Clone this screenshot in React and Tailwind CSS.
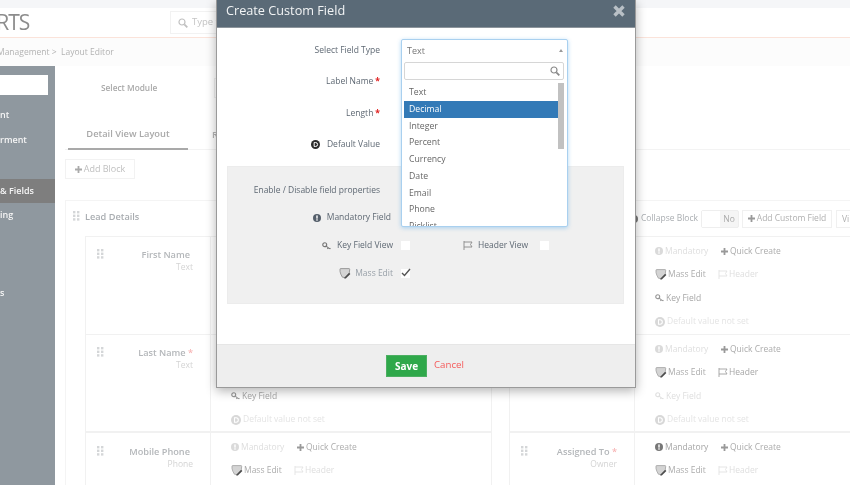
import React from "react";

const Dots = ({ c = "#d4d6d8" }) => (
  <svg width="7" height="10" viewBox="0 0 7 10" fill={c} className="shrink-0">
    {[0, 4].map((x) => [0, 3.6, 7.2].map((y) => <rect key={x + "-" + y} x={x} y={y} width="2.4" height="2.4" />))}
  </svg>
);
const Bang = ({ c = "#555f6b", s = 9 }) => (
  <svg width={s} height={s} viewBox="0 0 10 10" className="shrink-0">
    <circle cx="5" cy="5" r="5" fill={c} />
    <rect x="4.1" y="1.8" width="1.8" height="4" fill="#fff" />
    <rect x="4.1" y="6.6" width="1.8" height="1.7" fill="#fff" />
  </svg>
);
const Dee = ({ c = "#d8d8d8", s = 10, t = "#fff" }) => (
  <svg width={s} height={s} viewBox="0 0 10 10" className="shrink-0">
    <circle cx="5" cy="5" r="5" fill={c} />
    <path d="M3.5 2.8h1.6a2.2 2.2 0 0 1 0 4.4H3.5z" fill="none" stroke={t} strokeWidth="1.1" />
  </svg>
);
const Key = ({ c = "#777" }) => (
  <svg width="9" height="8" viewBox="0 0 10 9" fill="none" stroke={c} className="shrink-0">
    <circle cx="3" cy="3" r="2.2" strokeWidth="1.3" />
    <path d="M4.6 4.6 8.6 7.8M7 6.5 6 7.8M8.6 7.8 9.4 6.8" strokeWidth="1.2" />
  </svg>
);
const Flag = ({ c = "#777" }) => (
  <svg width="10" height="9" viewBox="0 0 10 9" fill="none" stroke={c} strokeWidth="0.9" className="shrink-0">
    <path d="M1 0v9M1 1h8L7.5 3.5 9 6H1" />
  </svg>
);
const Mass = ({ c = "#777" }) => (
  <svg width="12" height="11" viewBox="0 0 12 11" className="shrink-0">
    <path d="M1 1.2 Q1 .6 1.8 .6H10q.8 0 .7.8l-.4 3.4L6.5 9.6 3.4 9.2Q1.4 6 1 3.5z" fill="#d4d4d4" stroke={c} strokeWidth="0.8" />
    <path d="M5.4 9.6 10.2 4.8l1.2 1.2-4.6 4.4-1.6.2z" fill="#4d4d4d" />
  </svg>
);
const Plus = ({ c = "#777" }) => (
  <svg width="7" height="7" viewBox="0 0 7 7" fill={c} className="shrink-0">
    <path d="M2.6 0h1.8v2.6H7v1.8H4.4V7H2.6V4.4H0V2.6h2.6z" />
  </svg>
);
const Search = ({ c = "#8a8a8a", s = 10 }) => (
  <svg width={s} height={s} viewBox="0 0 10 10" fill="none" stroke={c} className="shrink-0">
    <circle cx="4" cy="4" r="3" strokeWidth="1.2" />
    <path d="M6.3 6.3 9.3 9.3" strokeWidth="1.8" />
  </svg>
);

const DIM = "#dedede";
const ON = "#a6a6a6";

const Row = ({ children, className = "" }) => <div className={"flex h-[23.5px] shrink-0 items-center whitespace-nowrap " + className}>{children}</div>;

const Props = ({ mand, hdr, key1 = true, pad, short }) => (
  <div className={"flex flex-col pt-[2.5px] text-[8.5px] " + pad}>
    <Row>
      <div className="flex w-[66px] items-center gap-[2px]" style={{ color: mand ? ON : DIM }}>
        <Bang c={mand ? "#777" : "#dadada"} s={8} />
        <span>Mandatory</span>
      </div>
      <div className="flex items-center gap-[2px] text-[#acacac]">
        <Plus c="#999" />
        <span>Quick Create</span>
      </div>
    </Row>
    <Row>
      <div className="flex w-[63px] items-center gap-[1px] text-[#acacac]">
        <Mass c="#a0a0a0" />
        <span>Mass Edit</span>
      </div>
      <div className="flex items-center gap-[1px]" style={{ color: hdr ? ON : DIM }}>
        <Flag c={hdr ? "#a0a0a0" : "#e2e2e2"} />
        <span>Header</span>
      </div>
    </Row>
    {!short && (
      <Row className="gap-[2px]">
        <Key c={key1 ? "#999" : "#e0e0e0"} />
        <span style={{ color: key1 ? ON : DIM }}>Key Field</span>
      </Row>
    )}
    {!short && (
      <Row className="gap-[2px] text-[#e4e4e4]">
        <Dee />
        <span>Default value not set</span>
      </Row>
    )}
  </div>
);

const FieldLabel = ({ name, type, req, top }) => (
  <div className={"flex w-[125px] shrink-0 border-r border-[#f1f1f1] pl-[11px] pr-[17px] " + top}>
    <Dots />
    <div className="flex-1 text-right">
      <div className={"text-[9.2px] leading-[12px] font-semibold text-[#b4b7ba] " + (req ? "" : "pr-[3px]")}>
        {name}
        {req && <span className="text-[#f7b5b5]"> *</span>}
      </div>
      <div className="text-[8.5px] leading-[12px] text-[#d4d4d4]">{type}</div>
    </div>
  </div>
);

const Opt = ({ children, on }) => (
  <div className={"h-[16.75px] pl-[5px] text-[8.7px] leading-[16.75px] " + (on ? "bg-[#337ab7] text-white" : "text-[#666]")}>
    {children}
  </div>
);

const Box = ({ checked }) => (
  <div className="relative h-[9px] w-[9px] bg-white">
    {checked && (
      <svg width="10" height="9" viewBox="0 0 10 9" className="absolute -top-[1px] left-0" fill="none" stroke="#555" strokeWidth="1.4">
        <path d="M1 5l2.5 2.5L9 1" />
      </svg>
    )}
  </div>
);

export default function App() {
  return (
    <div className="relative h-[485px] w-[850px] overflow-hidden bg-white blur-[0.4px]" style={{ fontFamily: '"Open Sans", sans-serif' }}>
      <div className="h-[8px] bg-[#f5f6f8]" />
      <header className="flex h-[30px] items-center border-b border-[#fbe3da] bg-white">
        <div className="-ml-[16px] w-[186px] text-[21px] leading-none tracking-[-1px] text-[#8c8c8c]">ARTS</div>
        <div className="flex h-[23px] w-[60px] items-center gap-[4px] border border-[#f2f2f2] pl-[7px] text-[9.5px] text-[#c4c4c4]">
          <Search c="#c0c0c0" />
          <span className="whitespace-nowrap">Type t</span>
        </div>
      </header>
      <div className="flex h-[28px] items-center bg-[#fcfcfc] text-[8.5px] text-[#b3b3b3]">
        <span className="-ml-[3px] whitespace-nowrap">Management &gt;&nbsp; Layout Editor</span>
      </div>
      <div className="flex h-[419px]">
        <aside className="w-[55px] shrink-0 overflow-hidden bg-[#8f989f] pt-[9px] text-[9px] font-semibold text-[#f5f5f5]">
          <div className="h-[20px] w-[48px] bg-white" />
          <div className="mt-[14px] h-[12px] leading-[12px]">nt</div>
          <div className="mt-[13px] h-[12px] whitespace-nowrap leading-[12px]">rment</div>
          <div className="mt-[33px] flex h-[24px] items-center whitespace-nowrap bg-[#7e7e7e]">&amp; Fields</div>
          <div className="mt-[6px] h-[12px] leading-[12px]">ing</div>
          <div className="mt-[66px] h-[12px] leading-[12px]">s</div>
        </aside>
        <main className="min-w-0 flex-1 pl-[10px]">
          <div className="flex h-[44px] items-center pl-[36px] text-[8.3px] font-semibold text-[#a9a9a9]">
            Select Module
            <div className="ml-[57px] h-[20px] w-[20px] border border-[#f0f0f0]" />
          </div>
          <div className="flex h-[40px] border-b border-[#f3f3f3] pl-[3px]">
            <div className="flex h-[40px] w-[120px] items-center justify-center border-b-2 border-[#a9a9a9] pt-[10px] text-[9.3px] font-semibold text-[#a9a9a9]">
              Detail View Layout
            </div>
            <div className="ml-[24px] flex items-center pt-[10px] text-[9.3px] font-semibold text-[#b5b5b5]">R</div>
          </div>
          <div className="mt-[9px] flex h-[20px] w-[70px] items-center justify-center gap-[2px] border border-[#f2f2f2] text-[9px] text-[#c0c0c0]">
            <Plus c="#aaa" />
            Add Block
          </div>
          <section className="mt-[21px] w-[900px] border border-[#f4f4f4] pl-[19px]">
            <div className="flex h-[35px] items-center">
              <div className="-ml-[12px] -mt-[4px] flex w-[557px] shrink-0 items-center gap-[5px] text-[9.2px] font-semibold text-[#a9adb1]">
                <Dots />
                Lead Details
              </div>
              <div className="flex shrink-0 items-center gap-[3px] text-[8.5px] text-[#a9adb1]">
                <Bang c="#777" s={8} />
                <span className="whitespace-nowrap">Collapse Block</span>
                <div className="flex h-[18px] w-[38px] rounded-[2px] border border-[#eee] bg-[#f5f5f5]">
                  <div className="w-[18px] bg-white" />
                  <div className="flex-1 text-center leading-[16px] text-[#aaa]">No</div>
                </div>
                <div className="flex h-[18px] w-[90px] items-center justify-center gap-[2px] whitespace-nowrap border border-[#f0f0f0] text-[#b0b0b0]">
                  <Plus c="#999" />
                  Add Custom Field
                </div>
                <div className="ml-[1px] h-[18px] w-[40px] border border-[#f0f0f0] pl-[5px] leading-[16px] text-[#b0b0b0]">Vi</div>
              </div>
            </div>
            <div className="flex gap-[17px]">
              <div className="w-[407px] shrink-0 border border-[#f1f1f1]">
                <div className="flex h-[98px] border-b border-[#f1f1f1]">
                  <FieldLabel name="First Name" type="Text" top="pt-[12px]" />
                </div>
                <div className="flex h-[98px] border-b-2 border-[#f1f1f1]">
                  <FieldLabel name="Last Name" type="Text" req top="pt-[12px]" />
                  <Props pad="pl-[20px]" />
                </div>
                <div className="flex h-[60px]">
                  <FieldLabel name="Mobile Phone" type="Phone" top="pt-[13px]" />
                  <Props short pad="pl-[20px]" />
                </div>
              </div>
              <div className="w-[400px] shrink-0 border border-[#f1f1f1]">
                <div className="flex h-[98px] border-b border-[#f1f1f1]">
                  <FieldLabel name="" type="" top="" />
                  <Props pad="pl-[20px]" />
                </div>
                <div className="flex h-[98px] border-b-2 border-[#f1f1f1]">
                  <FieldLabel name="" type="" top="" />
                  <Props hdr key1={false} pad="pl-[20px]" />
                </div>
                <div className="flex h-[60px]">
                  <FieldLabel name="Assigned To" type="Owner" req top="pt-[13px]" />
                  <Props mand short pad="pl-[20px]" />
                </div>
              </div>
            </div>
          </section>
        </main>
      </div>

      {/* Modal */}
      <div className="absolute top-0 left-[216px] flex h-[388px] w-[420px] flex-col border border-t-0 border-[#9a9a9a] bg-white shadow-[0_3px_10px_rgba(0,0,0,0.3)]">
        <div className="flex h-[28px] shrink-0 items-center justify-between border-b border-[#8d959c] bg-[#5a6a77] pr-[10px] pb-[6px] pl-[9px]">
          <span className="text-[12.7px] font-normal text-[#f2f4f5]">Create Custom Field</span>
          <svg width="12" height="12" viewBox="0 0 12 12" stroke="#b9c0c6" strokeWidth="3.4">
            <path d="M1.5 1.5l9 9M10.5 1.5l-9 9" />
          </svg>
        </div>
        <div className="relative flex-1 pt-[6.5px] pr-[11px] pl-[10px] text-[8.5px] font-normal text-[#5e6873]">
          <div className="flex h-[31.5px] items-center justify-end pr-[244px]">Select Field Type</div>
          <div className="flex h-[31.5px] items-center justify-end gap-[2px] pr-[244px]">
            Label Name <span className="font-bold text-[#e02020]">*</span>
          </div>
          <div className="flex h-[31.5px] items-center justify-end gap-[2px] pr-[244px]">
            Length <span className="font-bold text-[#e02020]">*</span>
          </div>
          <div className="flex h-[31.5px] items-center justify-end gap-[7px] pr-[244px]">
            <Dee c="#2b2b2b" s={9} />
            Default Value
          </div>
          <div className="mt-[5px] h-[138px] border border-[#ececec] bg-[#f0f0f0] pt-[15px]">
            <div className="flex h-[18px] items-center justify-end pr-[243px]">Enable / Disable field properties</div>
            <div className="mt-[9px] flex h-[18px] items-center justify-end gap-[6px] pr-[232px]">
              <Bang s={8} />
              Mandatory Field
            </div>
            <div className="mt-[10px] flex h-[18px] items-center">
              <div className="flex w-[165px] items-center justify-end gap-[6px]">
                <Key />
                <span className="font-medium">Key Field View</span>
              </div>
              <div className="ml-[8px]"><Box /></div>
              <div className="ml-[53px] flex items-center gap-[5px]">
                <Flag c="#888" />
                <span className="font-medium">Header View</span>
              </div>
              <div className="ml-[12px]"><Box /></div>
            </div>
            <div className="mt-[10px] flex h-[18px] items-center">
              <div className="flex w-[165px] items-center justify-end gap-[4px] text-[#98a0a8]">
                <Mass c="#888" />
                Mass Edit
              </div>
              <div className="ml-[8px]"><Box checked /></div>
            </div>
          </div>

          {/* Open select */}
          <div className="absolute top-[11px] left-[184px] h-[188px] w-[167px] overflow-hidden rounded-[2px] border border-[#a9d0ef] bg-white shadow-[0_1px_4px_rgba(82,168,236,0.45)]">
            <div className="flex h-[21px] items-center justify-between pr-[4px] pl-[5px] text-[9px] text-[#777]">
              Text
              <span className="h-0 w-0 border-x-[2.5px] border-b-[3.5px] border-x-transparent border-b-[#999]" />
            </div>
            <div className="mr-[3px] ml-[2px] mt-[1px] flex h-[18px] items-center justify-end rounded-[2px] border border-[#d6d6d6] pr-[3px]">
              <Search />
            </div>
            <div className="relative mr-[3px] ml-[2px] mt-[4px]">
              <div className="mr-[6px]">
                <Opt>Text</Opt>
                <Opt on>Decimal</Opt>
                <Opt>Integer</Opt>
                <Opt>Percent</Opt>
                <Opt>Currency</Opt>
                <Opt>Date</Opt>
                <Opt>Email</Opt>
                <Opt>Phone</Opt>
                <Opt>Picklist</Opt>
              </div>
              <div className="absolute -top-[1px] right-0 h-[66px] w-[6px] bg-[#c1c1c1]" />
            </div>
          </div>
        </div>
        <div className="flex h-[43px] shrink-0 items-center border-t border-[#e6e6e6] bg-[#eeeeee] pl-[169px]">
          <div className="flex h-[22px] w-[41px] items-center justify-center border border-[#4caf62] bg-[#2fa84a] text-[10px] font-bold text-white">Save</div>
          <span className="ml-[7px] -mt-[1px] text-[9.7px] text-[#f55a5a]">Cancel</span>
        </div>
      </div>
    </div>
  );
}
